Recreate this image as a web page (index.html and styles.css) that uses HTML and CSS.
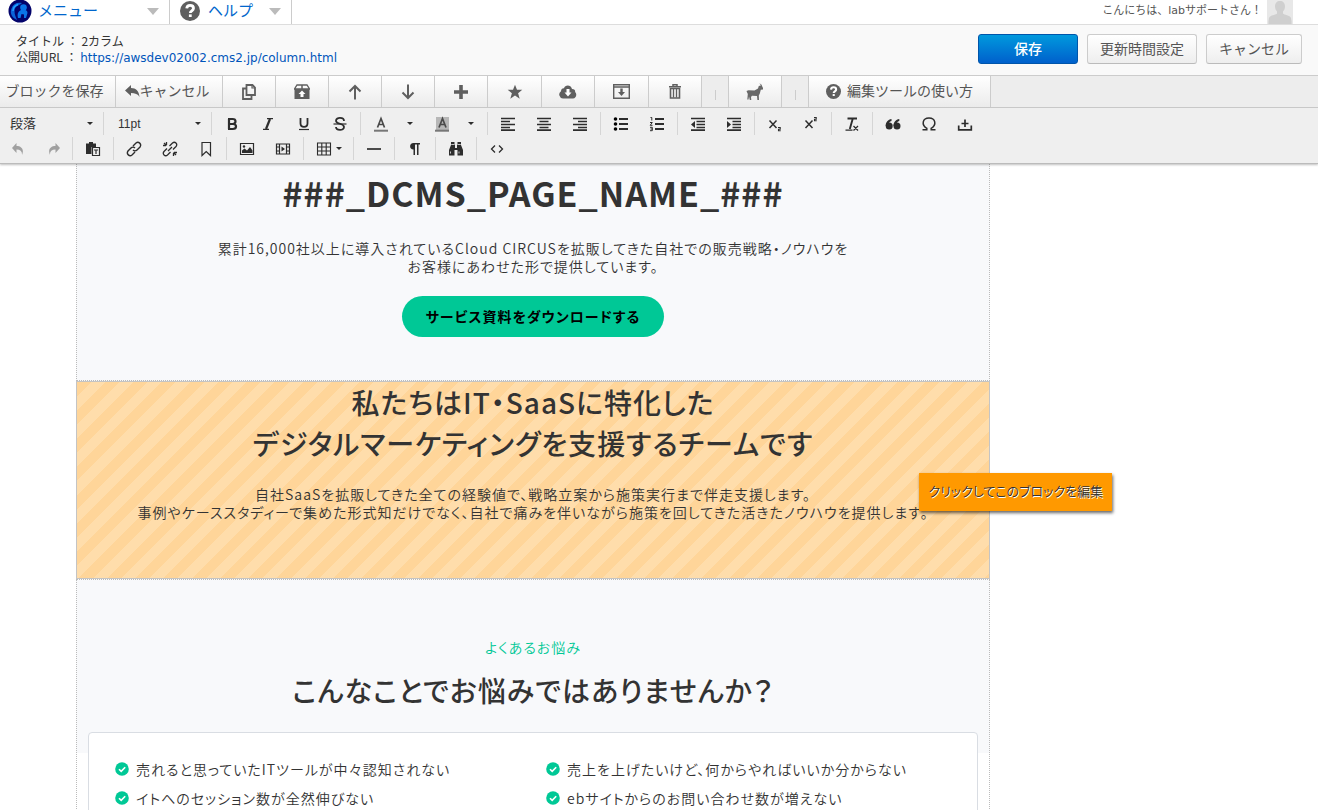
FILE: index.html
```html
<!DOCTYPE html>
<html lang="ja">
<head>
    <meta charset="UTF-8">
    <meta name="viewport" content="width=device-width, initial-scale=1.0">
    <title>2カラム</title>
    <link rel="stylesheet" href="styles.css">
</head>
<body>
    <header class="topbar">
        <button class="menu-button menu-main">
            <svg width="24" height="24" viewBox="0 0 24 24"><circle cx="12" cy="12" r="11.5" fill="#03036b"/><path d="M9 21C4 19 1.500 14 3.500 9.500 5 5 9 3 14 4c-1 1-2 1.500-3 2-3 1-4.500 3-4.500 6 0 4 1.500 6.500 2.500 9z" fill="#0a62d8"/><circle cx="15.500" cy="8.500" r="3.300" fill="#0a74e8"/><path d="M10 14c1-2 3-3.500 5-3.500 3 0 4.500 1.500 4.500 3.500l-1.500 5h-2v-3.500l-2.500-.5-1 4h-2.500c-.5-2-.5-3.500 0-5z" fill="#0a74e8"/><path d="M5 12c0-3 2-5.500 5-6.500" stroke="#22a2ff" stroke-width="1.500" fill="none"/></svg>
            <span>メニュー</span>
            <i class="arrow"></i>
        </button>
        <button class="menu-button menu-help">
            <svg width="20" height="20" viewBox="0 0 20 20"><circle cx="10" cy="10" r="10" fill="#5f5f5f"/><path d="M6.700 7.400c.2-2 1.500-3 3.400-3s3.400 1.100 3.400 2.900c0 2.400-3.200 2.500-3.200 4.600" fill="none" stroke="#fff" stroke-width="2.800"/><rect x="8.900" y="13.400" width="2.800" height="2.600" fill="#fff"/></svg>
            <span>ヘルプ</span>
            <i class="arrow"></i>
        </button>
        <div class="user">
            <span>こんにちは、labサポートさん！</span>
            <svg width="26" height="24" viewBox="0 0 26 24"><rect width="26" height="24" fill="#e8e8e8"/><path d="M13 1c3 0 5 2 5 5.500 0 2-1 4-2 5v2c1 1.500 7 1.500 8 4.500.6 2 .6 4 .6 6H1.400c0-2 0-4 .6-6 1-3 7-3 8-4.500v-2c-1-1-2-3-2-5C8 3 10 1 13 1z" fill="#cfcfcf"/></svg>
        </div>
    </header>

    <div class="infobar">
        <div class="page-info">
            <div>タイトル ： 2カラム</div>
            <div>公開URL ： <a href="#">https://awsdev02002.cms2.jp/column.html</a></div>
        </div>
        <div class="actions">
            <button class="btn btn-primary">保存</button>
            <button class="btn btn-time">更新時間設定</button>
            <button class="btn btn-cancel">キャンセル</button>
        </div>
    </div>

    <!-- ブロック操作 -->
    <nav class="blockbar">
        <button class="block-text block-save">ブロックを保存</button>
        <button class="block-text block-cancel"><svg width="15" height="12" viewBox="0 0 15 12"><path d="M6 0v3c5 0 8 3 8.500 9C13 9 10 8 6 8v3L0 5.500z" fill="#5f5f5f"/></svg>キャンセル</button>
        <button aria-label="複製"><svg width="16" height="16" viewBox="0 0 16 16" fill="none" stroke="#5f5f5f" stroke-width="1.800"><path d="M5.500 1h6L14 3.500V11H5.500z"/><path d="M5.500 4.500H2V15h8.500v-4"/><path d="M11 1v3h3" stroke-width="1.200"/></svg></button>
        <button aria-label="アーカイブ"><svg width="16" height="16" viewBox="0 0 16 16"><path d="M3 1h10l2.500 4H.5z" fill="none" stroke="#5f5f5f" stroke-width="1.300"/><path d="M8 1v4" stroke="#5f5f5f" stroke-width="1.500"/><path d="M.5 5h15v10H.5z" fill="#5f5f5f"/><path d="M8 6.500l3.500 3.500h-2v3h-3v-3h-2z" fill="#fff"/></svg></button>
        <button aria-label="上へ"><svg width="14" height="16" viewBox="0 0 14 16"><path d="M7 15.500V2M1.500 7.500L7 2l5.500 5.500" fill="none" stroke="#5f5f5f" stroke-width="2"/></svg></button>
        <button aria-label="下へ"><svg width="14" height="16" viewBox="0 0 14 16"><path d="M7 .5V14M1.500 8.500L7 14l5.500-5.500" fill="none" stroke="#5f5f5f" stroke-width="2"/></svg></button>
        <button aria-label="追加"><svg width="14" height="14" viewBox="0 0 14 14"><path d="M7 0v14M0 7h14" stroke="#5f5f5f" stroke-width="3.600"/></svg></button>
        <button class="wide" aria-label="お気に入り"><svg width="16" height="16" viewBox="0 0 16 16"><path d="M8 .8l2 5h5.300l-4.200 3.400 1.600 5.600L8 11.500l-4.700 3.300 1.600-5.600L.7 5.800H6z" fill="#5f5f5f"/></svg></button>
        <button aria-label="ダウンロード"><svg width="18" height="14" viewBox="0 0 18 14"><path d="M4 13.500a4 4 0 0 1-2-7.300C2 4 3.500 3 5 3.200 6-.5 12-.5 13 4c3 0 3.500 2 3 3 2.500 2 1 6.500-2 6.500z" fill="#5f5f5f"/><path d="M7.500 4h3v3.500h2L9 11.500 5.500 7.500h2z" fill="#fff"/></svg></button>
        <button class="wide" aria-label="挿入"><svg width="17" height="15" viewBox="0 0 17 15"><path d="M.7.7h15.600v13.600H.7zM.7 3h15.600" fill="none" stroke="#5f5f5f" stroke-width="1.400"/><path d="M7.300 4.500h2.400V8H12l-3.500 4L5 8h2.300z" fill="#5f5f5f"/></svg></button>
        <button aria-label="削除"><svg width="12" height="15" viewBox="0 0 12 15"><path d="M4 2V.7h4V2M0 2.700h12" fill="none" stroke="#5f5f5f" stroke-width="1.500"/><path d="M1.500 4.500h9V14h-9z" fill="none" stroke="#5f5f5f" stroke-width="1.600"/><path d="M4.500 5v8.500M7.500 5v8.500" stroke="#5f5f5f" stroke-width="1.300"/></svg></button>
        <span class="divider"></span>
        <button aria-label="ヤギ"><svg width="18" height="18" viewBox="0 0 18 18"><path d="M.5 8l2-.8 6 .3 3.500-2 .8-2.500 2-.5c-.2-1-.8-1.600-2-2 2 0 3 1 3.200 2.500L17 5v1.500l-2.200.3-1 3.700-1 2 .2 4.500h-1.600L11 13l-5-.3-1 1.300.3 3H3.800L3 13.500l-.5 3H1.300L1.800 11z" fill="#686868"/></svg></button>
        <span class="divider"></span>
        <button class="block-text block-help"><svg width="15" height="15" viewBox="0 0 20 20"><circle cx="10" cy="10" r="10" fill="#5f5f5f"/><path d="M6.700 7.400c.2-2 1.500-3 3.400-3s3.400 1.100 3.400 2.900c0 2.400-3.200 2.500-3.200 4.600" fill="none" stroke="#fff" stroke-width="2.800"/><rect x="8.900" y="13.400" width="2.800" height="2.600" fill="#fff"/></svg>編集ツールの使い方</button>
    </nav>

    <!-- 書式ツールバー -->
    <div class="editor">
        <div class="row">
            <div class="group group-first">
                <div class="select-wrap select-format"><select aria-label="段落の書式"><option>段落</option></select><i class="caret"></i></div>
            </div>
            <div class="group">
                <div class="select-wrap select-size"><select aria-label="文字サイズ"><option>11pt</option></select><i class="caret"></i></div>
            </div>
            <div class="group">
                <button aria-label="太字"><svg width="16" height="16" viewBox="0 0 16 16"><path d="M4 3h4.500c2 0 3 1 3 2.300S10.500 8 8.500 8H5M4.800 8h4c2 0 3.200 1 3.200 2.500S10.800 13 8.800 13H4M5 3v10" fill="none" stroke="#2d2d2d" stroke-width="2.200"/></svg></button>
                <button aria-label="斜体"><svg width="16" height="16" viewBox="0 0 16 16"><path d="M7 2.700h6M3 13.300h6" stroke="#2d2d2d" stroke-width="1.300"/><path d="M10 3L6 13" stroke="#2d2d2d" stroke-width="2.200"/></svg></button>
                <button aria-label="下線"><svg width="16" height="16" viewBox="0 0 16 16"><path d="M4.500 2v5.500c0 4.500 7 4.500 7 0V2" fill="none" stroke="#2d2d2d" stroke-width="1.800"/><path d="M3 13.500h10" stroke="#2d2d2d" stroke-width="1.200"/></svg></button>
                <button aria-label="取り消し線"><svg width="16" height="16" viewBox="0 0 16 16"><path d="M12 5c0-4-8-4-8-.3C4 8.500 12 7 12 11c0 4-8 3.500-8 0" fill="none" stroke="#2d2d2d" stroke-width="1.800"/><path d="M1.500 8h13" stroke="#2d2d2d" stroke-width="1.200"/></svg></button>
            </div>
            <div class="group">
                <button aria-label="文字色"><svg width="16" height="16" viewBox="0 0 16 16"><path d="M4.500 11.500L8 2.500l3.500 9M5.800 8.500h4.400" fill="none" stroke="#4a4a4a" stroke-width="1.700"/><path d="M1 14.700h14" stroke="#777" stroke-width="2"/></svg></button>
                <button class="open" aria-label="文字色を選択"><i class="caret"></i></button>
                <button aria-label="背景色"><svg width="16" height="16" viewBox="0 0 16 16"><path d="M2 1h13v13H2z" fill="#b7b7b7"/><path d="M5 11.500l3.500-9 3.500 9M6.300 8.500h4.400" fill="none" stroke="#4a4a4a" stroke-width="1.700"/><path d="M1 14.700h14" stroke="#777" stroke-width="2"/></svg></button>
                <button class="open" aria-label="背景色を選択"><i class="caret"></i></button>
            </div>
            <div class="group">
                <button aria-label="左揃え"><svg width="16" height="16" viewBox="0 0 16 16"><path d="M1 2.500h14M1 5.500h9M1 8.500h14M1 11.500h9M1 14.200h14" stroke="#2d2d2d" stroke-width="1.700"/></svg></button>
                <button aria-label="中央揃え"><svg width="16" height="16" viewBox="0 0 16 16"><path d="M1 2.500h14M3.500 5.500h9M1 8.500h14M3.500 11.500h9M1 14.200h14" stroke="#2d2d2d" stroke-width="1.700"/></svg></button>
                <button aria-label="右揃え"><svg width="16" height="16" viewBox="0 0 16 16"><path d="M1 2.500h14M6 5.500h9M1 8.500h14M6 11.500h9M1 14.200h14" stroke="#2d2d2d" stroke-width="1.700"/></svg></button>
            </div>
            <div class="group">
                <button aria-label="箇条書き"><svg width="16" height="16" viewBox="0 0 16 16"><path d="M6 3h9M6 8h9M6 13h9" stroke="#2d2d2d" stroke-width="1.800"/><circle cx="2.500" cy="3" r="1.800"/><circle cx="2.500" cy="8" r="1.800"/><circle cx="2.500" cy="13" r="1.800"/></svg></button>
                <button aria-label="番号付きリスト"><svg width="16" height="16" viewBox="0 0 16 16"><path d="M6 3h9M6 8h9M6 13h9" stroke="#2d2d2d" stroke-width="1.800"/><path d="M1.500 1.500h1.300v3M1 6.500h2.300L1.200 9.300h2.300M1 11.300h2.300v3.400H1M1.500 13h1.800" fill="none" stroke="#2d2d2d"/></svg></button>
            </div>
            <div class="group">
                <button aria-label="インデント解除"><svg width="16" height="16" viewBox="0 0 16 16"><path d="M1 2.500h14M6.500 5.500H15M6.500 8.500H15M6.500 11.500H15M1 14.200h14" stroke="#2d2d2d" stroke-width="1.700"/><path d="M5 5v7L1 8.500z" fill="#2d2d2d"/></svg></button>
                <button aria-label="インデント"><svg width="16" height="16" viewBox="0 0 16 16"><path d="M1 2.500h14M6.500 5.500H15M6.500 8.500H15M6.500 11.500H15M1 14.200h14" stroke="#2d2d2d" stroke-width="1.700"/><path d="M1 5v7l4-3.500z" fill="#2d2d2d"/></svg></button>
            </div>
            <div class="group">
                <button aria-label="下付き"><svg width="16" height="16" viewBox="0 0 16 16"><path d="M2.500 4.500l7 7.500M9.500 4.500L2.500 12" stroke="#2d2d2d" stroke-width="1.500"/><path d="M11 11.500h2.200v1.700H11.500v1.600h2.200" fill="none" stroke="#2d2d2d" stroke-width="1.100"/></svg></button>
                <button aria-label="上付き"><svg width="16" height="16" viewBox="0 0 16 16"><path d="M2.500 4.500l7 7.500M9.500 4.500L2.500 12" stroke="#2d2d2d" stroke-width="1.500"/><path d="M11 1.500h2.200v1.700H11.500v1.600h2.200" fill="none" stroke="#2d2d2d" stroke-width="1.100"/></svg></button>
            </div>
            <div class="group">
                <button aria-label="書式をクリア"><svg width="16" height="16" viewBox="0 0 16 16"><path d="M3.500 2.500H13M8.800 2.500L5.800 13" fill="none" stroke="#2d2d2d" stroke-width="1.900"/><path d="M1.500 14.200h7M9.500 10l4.500 4.500M14 10l-4.500 4.500" stroke="#2d2d2d" stroke-width="1.300"/></svg></button>
            </div>
            <div class="group group-last">
                <button aria-label="引用"><svg width="16" height="16" viewBox="0 0 16 16" fill="#2d2d2d"><circle cx="4.200" cy="10" r="3.500"/><circle cx="12" cy="10" r="3.500"/><path d="M.7 10C.7 6 3 3.500 6.500 3v2C4.500 5.500 3.500 7 3.500 9zM8.500 10c0-4 2.300-6.500 5.800-7v2c-2 .5-3 2-3 4z"/></svg></button>
                <button aria-label="特殊文字"><svg width="16" height="16" viewBox="0 0 16 16"><path d="M1.500 13.800h4.300v-1.500C0 9 1.500 2 8 2s8 7 2.200 10.300v1.500h4.300" fill="none" stroke="#2d2d2d" stroke-width="1.500"/></svg></button>
                <button aria-label="改ページなしスペース"><svg width="16" height="16" viewBox="0 0 16 16"><path d="M1.700 9.500v4.300h12.600V9.500M8 3.500v7.500M4.500 7.500h7" fill="none" stroke="#2d2d2d" stroke-width="1.700"/></svg></button>
            </div>
        </div>
        <div class="row">
            <div class="group group-first">
                <button class="dim" aria-label="元に戻す"><svg width="16" height="16" viewBox="0 0 16 16"><path d="M6.500 2v3c5 0 8 3.500 5.500 9 .3-3.500-1.500-5.500-5.500-5.500V12L2 7z" fill="#2d2d2d"/></svg></button>
                <button class="dim" aria-label="やり直し"><svg width="16" height="16" viewBox="0 0 16 16"><path d="M9.500 2v3C4.500 5 1.500 8.500 4 14c-.3-3.500 1.500-5.500 5.500-5.500V12L14 7z" fill="#2d2d2d"/></svg></button>
            </div>
            <div class="group">
                <button aria-label="テキストとして貼り付け"><svg width="16" height="16" viewBox="0 0 16 16"><path d="M1 2.500h3V1h4v1.500h3V6H6.500v7H1z" fill="#2d2d2d"/><path d="M7.500 6.500h7v8h-7z" fill="#efefef" stroke="#2d2d2d" stroke-width="1.200"/><path d="M9 9h4M11 9v4" stroke="#2d2d2d" stroke-width="1.200"/></svg></button>
            </div>
            <div class="group">
                <button aria-label="リンク"><svg width="16" height="16" viewBox="0 0 16 16" fill="none" stroke="#2d2d2d" stroke-width="1.400"><path d="M7 5l3-3c2.500-2 6 1 4 4l-3 3c-1 1-3 1-4 0M9 11l-3 3c-2.500 2-6-1-4-4l3-3c1-1 3-1 4 0"/></svg></button>
                <button aria-label="リンク解除"><svg width="16" height="16" viewBox="0 0 16 16" fill="none" stroke="#2d2d2d" stroke-width="1.300"><path d="M7.500 5l3-3c2.500-2 5.500 1 3.500 3.500l-3 3M8.500 11l-3 3c-2.500 2-5.500-1-3.500-3.500l3-3M6 10l4-4M4.500 1v3M1 4.500h3M2 2l2.500 2.500M11.500 12v3M12 11.500h3M11.500 11.500L14 14"/></svg></button>
                <button aria-label="アンカー"><svg width="16" height="16" viewBox="0 0 16 16"><path d="M4 1.500h8.500v13L8.200 10.500 4 14.500z" fill="none" stroke="#2d2d2d" stroke-width="1.200"/></svg></button>
            </div>
            <div class="group">
                <button aria-label="画像"><svg width="16" height="16" viewBox="0 0 16 16"><path d="M1.500 2.500h13v11h-13z" fill="none" stroke="#2d2d2d" stroke-width="1.200"/><path d="M3 12V9.500l2.500-2L8 9.500 11 6l2.500 3.500V12z" fill="#2d2d2d"/><circle cx="5" cy="5.500" r="1.200" fill="#2d2d2d"/></svg></button>
                <button aria-label="動画"><svg width="16" height="16" viewBox="0 0 16 16" fill="none" stroke="#2d2d2d"><path d="M1.500 3h13v10h-13zM4.500 3v10M11.500 3v10" stroke-width="1.200"/><path d="M1.500 6h3M1.500 10h3M11.500 6h3M11.500 10h3"/><path d="M6.500 5.500v5L10 8z" fill="#2d2d2d" stroke="none"/></svg></button>
            </div>
            <div class="group">
                <button class="table-button" aria-label="表"><svg width="16" height="16" viewBox="0 0 16 16"><path d="M1.500 2h13v12h-13zM1.500 6h13M1.500 10h13M5.800 2v12M10.200 2v12" fill="none" stroke="#2d2d2d" stroke-width="1.100"/></svg><i class="caret"></i></button>
            </div>
            <div class="group">
                <button aria-label="水平線"><svg width="16" height="16" viewBox="0 0 16 16"><path d="M1 8h14" stroke="#2d2d2d" stroke-width="1.700"/></svg></button>
            </div>
            <div class="group">
                <button aria-label="段落記号"><svg width="16" height="16" viewBox="0 0 16 16"><path d="M13 2H6.500C2 2 2 8.500 6.500 8.500V14H8V3.500h2V14h1.500V3.500H13z" fill="#2d2d2d"/></svg></button>
            </div>
            <div class="group">
                <button aria-label="検索と置換"><svg width="16" height="16" viewBox="0 0 16 16" fill="#2d2d2d"><path d="M3 1h3.500v3H7v3h2V4h.5V1H13v3l2 5v5.500H9.500V9h-3v5.500H1V9l2-5z"/><path d="M2.500 10.500v2M11 10.500v2M3.200 3.500h3M9.800 3.500h3" stroke="#efefef" stroke-width=".8"/></svg></button>
            </div>
            <div class="group group-last">
                <button aria-label="ソースコード"><svg width="16" height="16" viewBox="0 0 16 16"><path d="M6 4.500L2.500 8 6 11.500M10 4.500L13.500 8 10 11.500" fill="none" stroke="#2d2d2d" stroke-width="1.300"/></svg></button>
            </div>
        </div>
    </div>

    <main class="page">
        <section class="block hero">
            <h1>###_DCMS_PAGE_NAME_###</h1>
            <p>累計16,000社以上に導入されているCloud CIRCUSを拡販してきた自社での販売戦略・ノウハウを<br>お客様にあわせた形で提供しています。</p>
            <a class="download" href="#">サービス資料をダウンロードする</a>
        </section>

        <section class="block active">
            <h2>私たちはIT・SaaSに特化した<br>デジタルマーケティングを支援するチームです</h2>
            <p>自社SaaSを拡販してきた全ての経験値で、戦略立案から施策実行まで伴走支援します。<br>事例やケーススタディーで集めた形式知だけでなく、自社で痛みを伴いながら施策を回してきた活きたノウハウを提供します。</p>
            <div class="tooltip">クリックしてこのブロックを編集</div>
        </section>

        <section class="block worries">
            <p class="lead">よくあるお悩み</p>
            <h2>こんなことでお悩みではありませんか？</h2>
            <ul class="card">
                <li><svg width="14" height="14" viewBox="0 0 14 14"><circle cx="7" cy="7" r="6.800" fill="#00c896"/><path d="M4 7.200l2.200 2.200L10.200 5.200" fill="none" stroke="#fff" stroke-width="1.600"/></svg>売れると思っていたITツールが中々認知されない</li>
                <li><svg width="14" height="14" viewBox="0 0 14 14"><circle cx="7" cy="7" r="6.800" fill="#00c896"/><path d="M4 7.200l2.200 2.200L10.200 5.200" fill="none" stroke="#fff" stroke-width="1.600"/></svg>売上を上げたいけど、何からやればいいか分からない</li>
                <li><svg width="14" height="14" viewBox="0 0 14 14"><circle cx="7" cy="7" r="6.800" fill="#00c896"/><path d="M4 7.200l2.200 2.200L10.200 5.200" fill="none" stroke="#fff" stroke-width="1.600"/></svg>イトへのセッション数が全然伸びない</li>
                <li><svg width="14" height="14" viewBox="0 0 14 14"><circle cx="7" cy="7" r="6.800" fill="#00c896"/><path d="M4 7.200l2.200 2.200L10.200 5.200" fill="none" stroke="#fff" stroke-width="1.600"/></svg>ebサイトからのお問い合わせ数が増えない</li>
            </ul>
        </section>
    </main>
</body>
</html>
```
FILE: styles.css
```css
* {
    box-sizing: border-box;
}

body {
    margin: 0;
    height: 100vh;
    overflow: hidden;
    display: flex;
    flex-direction: column;
    background: #fff;
    color: #333;
    font-family: "DejaVu Sans", "Noto Sans CJK JP", sans-serif;
    font-size: 14px;
}

button {
    font-family: inherit;
    font-size: 14px;
    padding: 0;
    border: 0;
    background: none;
    color: inherit;
    cursor: pointer;
}

svg {
    flex: none;
}

/* 上部メニュー */
.topbar {
    display: flex;
    flex: none;
    height: 25px;
    border-bottom: 1px solid #ddd;
}

.menu-button {
    display: flex;
    align-items: center;
    height: 24px;
    border-right: 1px solid #ccc;
    color: #0066cc;
    font-size: 15px;
    line-height: 20px;
    padding: 0 10px 2px 8px;
    gap: 6px;
}

.menu-main {
    width: 170px;
}

.menu-help {
    width: 122px;
    padding-left: 10px;
    gap: 8px;
}

.arrow {
    margin-left: auto;
    border: 6px solid transparent;
    border-top: 7px solid #bbb;
    border-bottom: 0;
}

.user {
    display: flex;
    margin-left: auto;
    padding-right: 25px;
    gap: 5px;
    font-size: 11px;
    line-height: 22px;
    color: #555;
}

/* ページ情報 */
.infobar {
    display: flex;
    flex: none;
    align-items: center;
    justify-content: space-between;
    height: 50px;
    padding: 0 16px 2px;
    background: #f9f9f9;
}

.page-info {
    font-family: "Noto Sans CJK JP", sans-serif;
    font-size: 12px;
    line-height: 16px;
}

.page-info a {
    font-family: "DejaVu Sans", sans-serif;
    color: #0055bb;
    text-decoration: none;
}

.actions {
    display: flex;
    gap: 9px;
}

.btn {
    height: 30px;
    border: 1px solid #ccc;
    border-bottom-color: #bbb;
    border-radius: 3px;
    background: linear-gradient(#fff, #eee);
    color: #555;
    line-height: 26px;
}

.btn-primary {
    width: 100px;
    border-color: #0055aa;
    background: linear-gradient(#0099dd, #0060cc);
    color: #fff;
    font-weight: 500;
}

.btn-time {
    width: 110px;
}

.btn-cancel {
    width: 96px;
}

/* ブロック操作バー */
.blockbar {
    display: flex;
    flex: none;
    height: 33px;
    border-top: 1px solid #ccc;
    border-bottom: 1px solid #ccc;
    background: #ededed;
}

.blockbar button {
    display: flex;
    align-items: center;
    justify-content: center;
    width: 53px;
    border-right: 1px solid #ccc;
    background: linear-gradient(#fff, #ebebeb);
    color: #555;
}

.blockbar .wide {
    width: 54px;
}

.blockbar .block-text {
    line-height: 20px;
    padding-bottom: 1px;
}

.blockbar .block-save {
    width: 116px;
    padding-right: 6px;
}

.blockbar .block-cancel {
    width: 107px;
    padding-right: 4px;
}

.blockbar .block-help {
    width: 182px;
    gap: 6px;
}

.divider {
    display: flex;
    align-items: center;
    justify-content: center;
    width: 27px;
    border-right: 1px solid #ccc;
}

.divider::before {
    content: "";
    width: 1px;
    height: 10px;
    margin-top: 6px;
    background: #ccc;
}

/* 書式ツールバー */
.editor {
    position: relative;
    z-index: 1;
    flex: none;
    padding: 4px 0 1px;
    background: #efefef;
    border-bottom: 1px solid #bbb;
    box-shadow: 0 1px 2px rgba(0, 0, 0, 0.25);
}

.row {
    display: flex;
    height: 25px;
}

.group {
    display: flex;
    height: 23px;
    padding: 0 2px;
    border-right: 1px solid #d5d5d5;
}

.group-first {
    padding: 0;
}

.group-last {
    border-right: 0;
}

.group button {
    display: flex;
    align-items: center;
    justify-content: center;
    width: 36px;
}

.group .open {
    width: 25px;
    padding-right: 4px;
}

.group .table-button {
    width: 45px;
    gap: 4px;
}

.group .dim {
    opacity: 0.4;
}

.caret {
    border: 3px solid transparent;
    border-top-color: #2d2d2d;
    border-bottom: 0;
}

.select-wrap {
    display: flex;
    align-items: center;
    width: 103px;
    padding: 0 10px;
}

.select-size {
    padding: 0 8px 0 12px;
}

.select-wrap select {
    flex: 1;
    appearance: none;
    border: 0;
    padding: 0;
    background: none;
    color: #333;
    font-family: "Liberation Sans", "Noto Sans CJK JP", sans-serif;
    font-size: 13px;
}

.select-size select {
    font-size: 12px;
}

/* 編集中のページ */
.page {
    flex: 1;
    min-height: 0;
    width: calc(100% - 76px);
    max-width: 914px;
    margin-left: 76px;
    font-family: "Noto Sans CJK JP", sans-serif;
    font-weight: 350;
    font-feature-settings: "palt";
    letter-spacing: 1px;
    text-align: center;
    line-height: 18px;
}

.page h1,
.page h2,
.page p {
    margin: 0;
}

.page h1 {
    font-size: 34px;
    line-height: 42px;
}

.page h2 {
    font-size: 28px;
    font-weight: 500;
    line-height: 41px;
}

.block {
    border: 1px dotted #bbb;
    border-top: 0;
    background: #f8f9fb;
}

.hero {
    padding: 8px 20px 43px;
}

.hero p {
    padding: 25px 0 21px;
}

.download {
    display: inline-block;
    padding: 0 24px;
    border-radius: 21px;
    background: #00c896;
    color: #000;
    font-weight: bold;
    line-height: 41px;
    text-decoration: none;
    vertical-align: top;
}

.active {
    position: relative;
    padding: 0 20px 57px;
    border: 1px solid #c4c4c4;
    background: repeating-linear-gradient(135deg, #ffd599 0 10px, #ffddab 10px 20px);
}

.active p {
    padding-top: 21px;
}

/* ブロックの右端に重ねて表示 */
.tooltip {
    position: absolute;
    top: 91px;
    right: -123px;
    padding: 0 9px 2px;
    background: #ff9900;
    box-shadow: 1px 2px 3px rgba(0, 0, 0, 0.6);
    color: #333;
    font-size: 13px;
    line-height: 36px;
    letter-spacing: 0;
    text-shadow: 1px 1px 0 #fff;
}

.worries {
    padding: 58px 11px 0;
    border-top: 1px dotted #bbb;
    border-bottom: 0;
    background: linear-gradient(#f8f9fb 173px, #fff 173px);
}

.worries .lead {
    color: #00c896;
    padding-bottom: 14px;
}

.card {
    display: grid;
    grid-template-columns: 1fr 1fr;
    gap: 11px 26px;
    margin: 21px 0 0;
    padding: 27px 26px;
    border: 1px solid #d9dde3;
    border-radius: 4px;
    background: #fff;
    list-style: none;
    text-align: left;
}

.card li {
    display: flex;
    align-items: center;
    gap: 7px;
}
```
